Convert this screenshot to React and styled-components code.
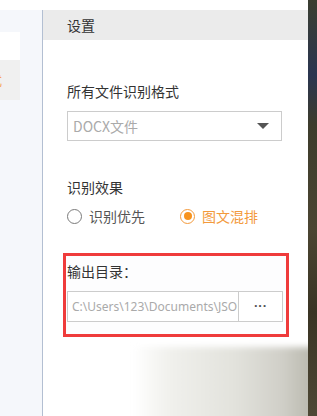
import styled, { createGlobalStyle } from "styled-components"

const Global = createGlobalStyle`
body{
    margin:0;
    background:#ffffff;
    font-family:"Noto Sans CJK SC","Noto Sans",sans-serif;
}
`

function Radio({ checked, children }) {
    return (
        <RadioItem checked={checked}>
            <Circle checked={checked} />
            <span>{children}</span>
        </RadioItem>
    )
}

export default function App() {
    return (
        <>
            <Global />
            <Page>
                <Window>
                    <TopGap />
                    <Body>
                        <Sidebar>
                            <SideItem />
                            <SideItem active>式</SideItem>
                        </Sidebar>
                        <Main>
                            <Header>设置</Header>
                            <Content>
                                <Label top={41}>所有文件识别格式</Label>
                                <Select>
                                    <span>DOCX文件</span>
                                    <Arrow />
                                </Select>
                                <Label top={36}>识别效果</Label>
                                <RadioRow>
                                    <Radio>识别优先</Radio>
                                    <Radio checked>图文混排</Radio>
                                </RadioRow>
                                <Highlight>
                                    <Label top={0}>输出目录：</Label>
                                    <PathBox>
                                        <PathText>C:\Users\123\Documents\JSON\Output</PathText>
                                        <Browse>···</Browse>
                                    </PathBox>
                                </Highlight>
                                <Smudge />
                            </Content>
                        </Main>
                    </Body>
                </Window>
                <Backdrop />
            </Page>
        </>
    )
}

const Page = styled.div`
width:317px;
height:416px;
display:flex;
overflow:hidden;
`
const Window = styled.div`
width:308px;
flex-shrink:0;
display:flex;
flex-direction:column;
background:#ffffff;
`
const TopGap = styled.div`
height:10px;
flex-shrink:0;
background:#ffffff;
`
const Body = styled.div`
flex:1;
min-height:0;
overflow:hidden;
display:flex;
`
const Sidebar = styled.div`
width:42px;
flex-shrink:0;
background:#f5f7fb;
border-right:1px solid #b3bfd2;
padding-top:22px;
`
const SideItem = styled.div`
width:20px;
height:${p => p.active ? 40 : 28}px;
background:${p => p.active ? "#f0f0f0" : "#ffffff"};
color:#f5a35a;
font-size:13px;
line-height:40px;
text-indent:-11px;
overflow:hidden;
`
const Main = styled.div`
flex:1;
min-width:0;
display:flex;
flex-direction:column;
`
const Header = styled.div`
height:30px;
flex-shrink:0;
background:#ebebeb;
padding-left:24px;
font-size:14px;
line-height:30px;
color:#333333;
`
const Content = styled.div`
padding-left:24px;
display:flex;
flex-direction:column;
`
const Label = styled.div`
margin-top:${p => p.top}px;
font-size:14px;
line-height:20px;
color:#333333;
`
const Select = styled.div`
margin-top:10px;
width:215px;
height:30px;
flex-shrink:0;
box-sizing:border-box;
border:1px solid #cccccc;
display:flex;
align-items:center;
justify-content:space-between;
padding:0 12px 0 5px;
font-size:14px;
color:#aaaaaa;
`
const Arrow = styled.div`
width:0;
height:0;
border-left:6px solid transparent;
border-right:6px solid transparent;
border-top:6px solid #555555;
`
const RadioRow = styled.div`
margin-top:9px;
display:flex;
gap:35px;
`
const RadioItem = styled.div`
display:flex;
align-items:center;
gap:7px;
font-size:14px;
line-height:20px;
color:${p => p.checked ? "#f39a3c" : "#555555"};
`
const Circle = styled.div`
width:15px;
height:15px;
box-sizing:border-box;
border-radius:50%;
border:1.5px solid ${p => p.checked ? "#f39a3c" : "#7a7a7a"};
display:flex;
align-items:center;
justify-content:center;
&::after{
    content:"";
    display:${p => p.checked ? "block" : "none"};
    width:8px;
    height:8px;
    border-radius:50%;
    background:#f7931e;
}
`
const Highlight = styled.div`
margin-top:27px;
margin-left:-4px;
width:226px;
height:84px;
flex-shrink:0;
box-sizing:border-box;
border:3px solid #ef3b3b;
padding:5px 0 0 1px;
background:#fdfdfe;
`
const PathBox = styled.div`
margin-top:10px;
width:216px;
height:31px;
box-sizing:border-box;
border:1px solid #cccccc;
display:flex;
background:#ffffff;
`
const PathText = styled.div`
flex:1;
min-width:0;
overflow:hidden;
white-space:nowrap;
padding-left:4px;
font-family:"Noto Sans","Noto Sans CJK SC",sans-serif;
font-size:12px;
line-height:29px;
color:#aaaaaa;
`
const Browse = styled.div`
width:43px;
flex-shrink:0;
border-left:1px solid #cccccc;
text-align:center;
font-family:"Liberation Sans",sans-serif;
font-size:13px;
font-weight:bold;
line-height:27px;
color:#555555;
`
const Smudge = styled.div`
margin-top:10px;
margin-left:66px;
width:186px;
height:90px;
flex-shrink:0;
background:linear-gradient(90deg,#ffffff 0%,#f0f0ec 20%,#e2e2dc 55%,#d0cfc8 80%,#b4b3a8 100%);
filter:blur(3px);
`
const Backdrop = styled.div`
width:9px;
flex-shrink:0;
background:linear-gradient(180deg,#3b3e30 0%,#2a3550 18%,#3d3c2c 30%,#4b4532 55%,#3a3424 75%,#4e4835 100%);
`
